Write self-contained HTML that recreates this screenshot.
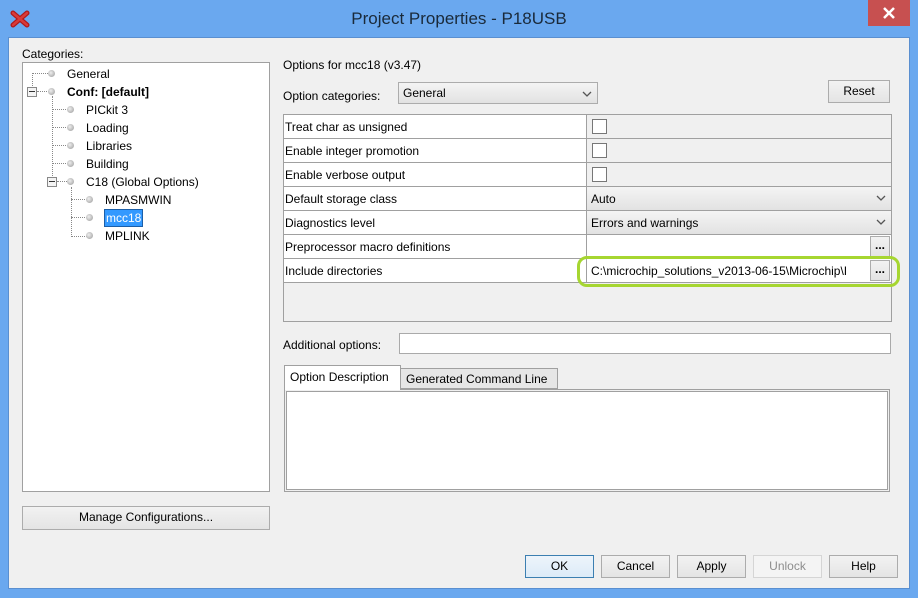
<!DOCTYPE html>
<html><head><style>
*{box-sizing:border-box;margin:0;padding:0}
body{width:918px;height:598px;background:#6aa8ef;position:relative;overflow:hidden;font-family:"Liberation Sans",Tahoma,sans-serif;font-size:12px;color:#000}
.a{position:absolute}
.title{left:0;top:9px;width:918px;text-align:center;font-size:17px;color:#1a2a3a}
.client{left:8px;top:37px;width:902px;height:552px;background:#f0f0f0;border:1px solid #5a8fd0}
.btn{position:absolute;background:linear-gradient(#f2f2f2,#e4e4e4);border:1px solid #acacac;text-align:center;line-height:21px}
.tree{left:22px;top:62px;width:248px;height:430px;background:#fff;border:1px solid #a0a0a0}
.ti{position:absolute;white-space:nowrap;line-height:14px}
.dot{position:absolute;width:7px;height:7px;border-radius:50%;background:radial-gradient(circle at 40% 40%,#eee,#999)}
.dv{position:absolute;border-left:1px dotted #888}
.dh{position:absolute;border-top:1px dotted #888;height:0}
.exp{position:absolute;width:10px;height:10px;border:1px solid #888;background:#f4f4f4}
.exp:after{content:"";position:absolute;left:1px;top:3px;width:6px;border-top:1px solid #333}
.row{position:absolute;left:284px;width:607px;height:24px;border-bottom:1px solid #a0a0a0}
.row .l{position:absolute;left:0;top:0;width:303px;height:23px;background:#fff;border-right:1px solid #a0a0a0;padding-left:1px;line-height:24px}
.row .r{position:absolute;left:303px;top:0;width:304px;height:23px;line-height:24px;padding-left:4px}
.cb{position:absolute;left:5px;top:4px;width:15px;height:15px;border:1px solid #777;background:#fff}
.combo{background:linear-gradient(#f4f4f4,#e2e2e2)}
.chev{position:absolute;right:5px;top:8px}
</style></head><body>
<svg class="a" style="left:10px;top:10px" width="20" height="18" viewBox="0 0 20 18"><path d="M3 3L17 15M17 3L3 15" stroke="#b01818" stroke-width="5" stroke-linecap="round"/><path d="M3 3L17 15M17 3L3 15" stroke="#d83a3a" stroke-width="2.5" stroke-linecap="round"/></svg>
<div class="a title">Project Properties - P18USB</div>
<div class="a" style="left:868px;top:0;width:42px;height:26px;background:#c75050"><svg width="42" height="26"><path d="M16 8L26 18M26 8L16 18" stroke="#fff" stroke-width="2.5"/></svg></div>
<div class="a client"></div>

<div class="a" style="left:22px;top:47px">Categories:</div>
<div class="a tree">
 <div class="dv" style="left:9px;top:10px;height:19px"></div>
 <div class="dh" style="left:9px;top:10px;width:20px"></div>
 <div class="dot" style="left:25px;top:7px"></div><div class="ti" style="left:44px;top:4px">General</div>
 <div class="dh" style="left:14px;top:28px;width:14px"></div>
 <div class="exp" style="left:4px;top:24px"></div>
 <div class="dot" style="left:25px;top:25px"></div><div class="ti" style="left:44px;top:22px;font-weight:bold">Conf: [default]</div>
 <div class="dv" style="left:29px;top:33px;height:86px"></div>
 <div class="dh" style="left:29px;top:46px;width:16px"></div><div class="dot" style="left:44px;top:43px"></div><div class="ti" style="left:63px;top:40px">PICkit 3</div>
 <div class="dh" style="left:29px;top:64px;width:16px"></div><div class="dot" style="left:44px;top:61px"></div><div class="ti" style="left:63px;top:58px">Loading</div>
 <div class="dh" style="left:29px;top:82px;width:16px"></div><div class="dot" style="left:44px;top:79px"></div><div class="ti" style="left:63px;top:76px">Libraries</div>
 <div class="dh" style="left:29px;top:100px;width:16px"></div><div class="dot" style="left:44px;top:97px"></div><div class="ti" style="left:63px;top:94px">Building</div>
 <div class="dh" style="left:34px;top:118px;width:10px"></div>
 <div class="exp" style="left:24px;top:114px"></div>
 <div class="dot" style="left:44px;top:115px"></div><div class="ti" style="left:63px;top:112px">C18 (Global Options)</div>
 <div class="dv" style="left:48px;top:124px;height:50px"></div>
 <div class="dh" style="left:48px;top:136px;width:16px"></div><div class="dot" style="left:63px;top:133px"></div><div class="ti" style="left:82px;top:130px">MPASMWIN</div>
 <div class="dh" style="left:48px;top:154px;width:16px"></div><div class="dot" style="left:63px;top:151px"></div><div class="ti" style="left:81px;top:146px;background:#3399ff;color:#fff;border:1px solid #1c5fa8;padding:1px 1px">mcc18</div>
 <div class="dh" style="left:48px;top:173px;width:16px"></div><div class="dot" style="left:63px;top:169px"></div><div class="ti" style="left:82px;top:166px">MPLINK</div>
</div>
<div class="btn" style="left:22px;top:506px;width:248px;height:24px">Manage Configurations...</div>

<div class="a" style="left:283px;top:58px">Options for mcc18 (v3.47)</div>
<div class="a" style="left:283px;top:89px">Option categories:</div>
<div class="btn combo" style="left:398px;top:82px;width:200px;height:22px;text-align:left;padding-left:4px;line-height:20px">General<svg class="chev" width="10" height="6"><path d="M1 1L5 5L9 1" stroke="#555" fill="none" stroke-width="1.3"/></svg></div>
<div class="btn" style="left:828px;top:80px;width:62px;height:23px">Reset</div>

<div class="a" style="left:283px;top:114px;width:609px;height:208px;border:1px solid #a0a0a0;background:#f0f0f0"></div>
<div class="row" style="top:115px"><div class="l">Treat char as unsigned</div><div class="r"><div class="cb"></div></div></div>
<div class="row" style="top:139px"><div class="l">Enable integer promotion</div><div class="r"><div class="cb"></div></div></div>
<div class="row" style="top:163px"><div class="l">Enable verbose output</div><div class="r"><div class="cb"></div></div></div>
<div class="row" style="top:187px"><div class="l">Default storage class</div><div class="r combo">Auto<svg class="chev" width="10" height="6"><path d="M1 1L5 5L9 1" stroke="#555" fill="none" stroke-width="1.3"/></svg></div></div>
<div class="row" style="top:211px"><div class="l">Diagnostics level</div><div class="r combo">Errors and warnings<svg class="chev" width="10" height="6"><path d="M1 1L5 5L9 1" stroke="#555" fill="none" stroke-width="1.3"/></svg></div></div>
<div class="row" style="top:235px"><div class="l">Preprocessor macro definitions</div><div class="r" style="background:#fff"><div class="btn" style="right:1px;top:1px;width:20px;height:21px;line-height:16px;font-weight:bold">...</div></div></div>
<div class="row" style="top:259px"><div class="l">Include directories</div><div class="r" style="background:#fff;overflow:hidden;white-space:nowrap;padding-right:22px">C:\microchip_solutions_v2013-06-15\Microchip\I<div class="btn" style="right:1px;top:1px;width:20px;height:21px;line-height:16px;font-weight:bold">...</div></div></div>
<div class="a" style="left:577px;top:256px;width:323px;height:31px;border:3px solid #a6d631;border-radius:10px"></div>

<div class="a" style="left:283px;top:338px">Additional options:</div>
<div class="a" style="left:399px;top:333px;width:492px;height:21px;background:#fff;border:1px solid #aaa"></div>

<div class="a" style="left:284px;top:389px;width:606px;height:103px;border:1px solid #a0a0a0;background:#fff;box-shadow:inset 0 0 0 1px #f0f0f0, inset 0 0 0 2px #a0a0a0"></div>
<div class="a" style="left:284px;top:365px;width:117px;height:25px;background:#fff;border:1px solid #a0a0a0;border-bottom:none;padding-left:5px;line-height:22px">Option Description</div>
<div class="a" style="left:400px;top:368px;width:158px;height:21px;background:#e6e6e6;border:1px solid #a0a0a0;padding-left:5px;line-height:21px">Generated Command Line</div>

<div class="btn" style="left:525px;top:555px;width:69px;height:23px;border-color:#3c7fb1;background:linear-gradient(#edf4fb,#dcebf8)">OK</div>
<div class="btn" style="left:601px;top:555px;width:69px;height:23px">Cancel</div>
<div class="btn" style="left:677px;top:555px;width:69px;height:23px">Apply</div>
<div class="btn" style="left:753px;top:555px;width:69px;height:23px;background:#f4f4f4;border-color:#d5d5d5;color:#8d8d8d">Unlock</div>
<div class="btn" style="left:829px;top:555px;width:69px;height:23px">Help</div>
</body></html>
